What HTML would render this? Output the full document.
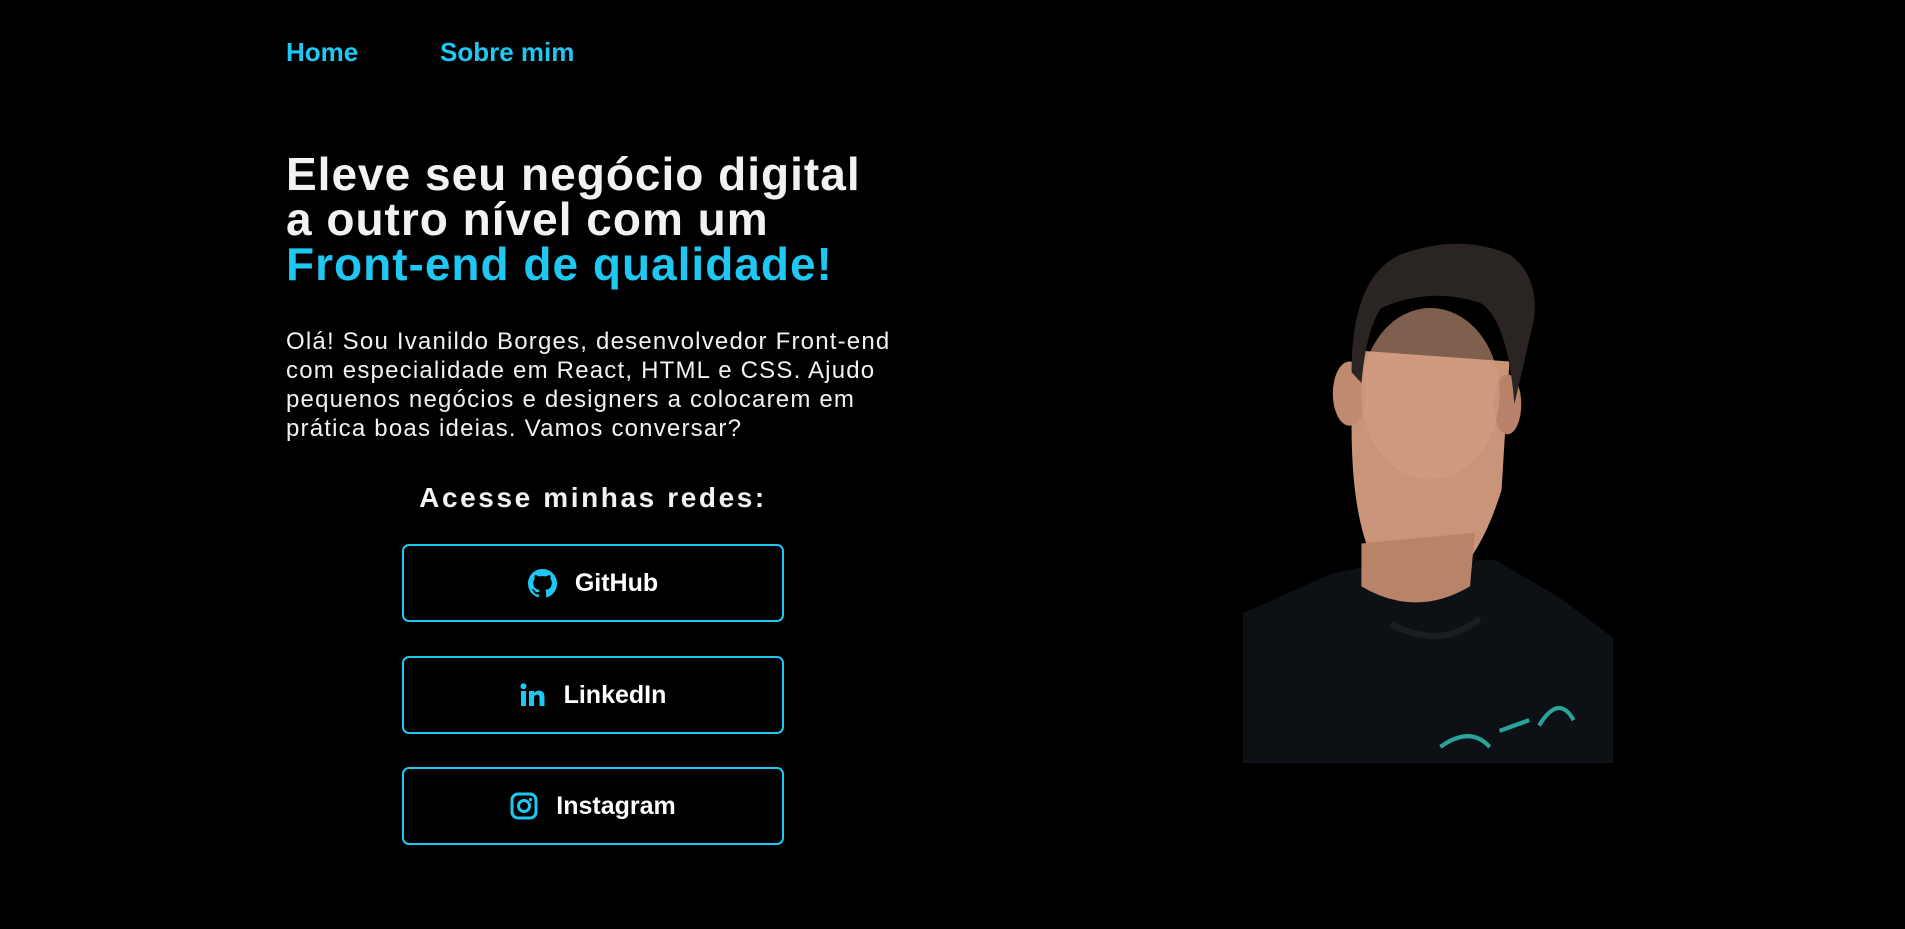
<!DOCTYPE html>
<html><head><meta charset="utf-8"><style>
*{margin:0;padding:0;box-sizing:border-box}
body{width:1905px;height:929px;background:#000;overflow:hidden;position:relative;font-family:"Liberation Sans",sans-serif;color:#f2f2f2}
.nav{position:absolute;top:37px;font-size:26px;font-weight:bold;color:#1ec8f2}
h1{position:absolute;left:286px;top:152px;font-size:46px;line-height:45px;font-weight:bold;letter-spacing:1px;white-space:nowrap}
h1 span{color:#1ec8f2}
p{position:absolute;left:286px;top:327px;font-size:24px;line-height:29px;letter-spacing:1.2px;white-space:nowrap}
h2{position:absolute;left:343px;width:500px;text-align:center;top:482px;font-size:28px;font-weight:bold;letter-spacing:2.6px}
.btn{position:absolute;left:402px;width:382px;height:78px;border:2px solid #1ec8f2;border-radius:7px;display:flex;align-items:center;justify-content:center;font-size:25px;font-weight:bold;color:#fff;gap:18px}
.btn svg{fill:#1ec8f2}
</style></head><body>
<div class="nav" style="left:286px">Home</div>
<div class="nav" style="left:440px">Sobre mim</div>
<h1>Eleve seu negócio digital<br>a outro nível com um<br><span>Front-end de qualidade!</span></h1>
<p>Olá! Sou Ivanildo Borges, desenvolvedor Front-end<br>com especialidade em React, HTML e CSS. Ajudo<br>pequenos negócios e designers a colocarem em<br>prática boas ideias. Vamos conversar?</p>
<h2>Acesse minhas redes:</h2>
<div class="btn" style="top:544px"><svg width="29" height="29" viewBox="0 0 16 16"><path d="M8 0C3.58 0 0 3.58 0 8c0 3.54 2.29 6.530 5.470 7.59.4.07.55-.17.55-.38v-1.34c-2.23.48-2.7-1.07-2.7-1.07-.36-.92-.89-1.170-.89-1.170-.73-.5.06-.49.06-.49.8.06 1.23.83 1.23.83.72 1.22 1.87.87 2.330.67.07-.52.28-.87.5-1.07-1.78-.2-3.64-.89-3.64-3.95 0-.87.31-1.59.82-2.15-.08-.2-.36-1.02.08-2.12 0 0 .67-.21 2.2.82a7.6 7.6 0 0 1 4 0c1.53-1.04 2.2-.82 2.2-.82.44 1.1.16 1.92.08 2.12.51.56.82 1.27.82 2.15 0 3.07-1.87 3.75-3.65 3.95.29.25.54.73.54 1.48v2.2c0 .21.15.46.55.38A8 8 0 0 0 16 8c0-4.42-3.58-8-8-8z"/></svg>GitHub</div>
<div class="btn" style="top:656px"><svg width="26" height="24" viewBox="0 0 26 24"><rect x="1" y="8" width="5" height="15"/><circle cx="3.5" cy="3.2" r="3"/><path d="M9 8h5v2.2c.8-1.4 2.5-2.6 5-2.6 4 0 5.5 2.5 5.5 6.5V23h-5v-8c0-2-.6-3.3-2.5-3.3S14 13 14 15v8H9z"/></svg>LinkedIn</div>
<div class="btn" style="top:767px"><svg width="28" height="28" viewBox="0 0 28 28"><rect x="2" y="2" width="24" height="24" rx="6" fill="none" stroke="#1ec8f2" stroke-width="3"/><circle cx="14" cy="14" r="5.5" fill="none" stroke="#1ec8f2" stroke-width="3"/><circle cx="20.5" cy="7.5" r="1.6"/></svg>Instagram</div>
<svg style="position:absolute;left:1243px;top:233px" width="375" height="530" viewBox="0 0 380 495" preserveAspectRatio="none">
<path d="M0 355 L90 318 L135 310 L255 305 L320 340 L375 378 L375 495 L0 495Z" fill="#0d1015"/>
<path d="M110 180 Q110 320 170 340 Q230 335 262 240 L270 120 L120 110Z" fill="#c99478"/>
<path d="M120 290 L120 330 Q175 360 230 330 L235 280Z" fill="#b88368"/>
<ellipse cx="108" cy="150" rx="17" ry="30" fill="#c08a70"/>
<ellipse cx="268" cy="160" rx="14" ry="28" fill="#b8826a"/>
<path d="M110 130 Q110 40 160 20 Q220 0 270 20 Q300 40 295 80 L275 160 Q268 80 240 65 Q190 50 140 70 Q125 90 120 140Z" fill="#2a2522"/>
<ellipse cx="190" cy="150" rx="70" ry="80" fill="#d39e82" opacity=".6"/>
<path d="M150 365 Q200 390 240 360" stroke="#1a1d22" stroke-width="6" fill="none"/>
<path d="M200 480 Q230 460 250 480 M260 465 l30 -10 M300 460 q20 -30 35 -5" stroke="#2aa39a" stroke-width="4" fill="none"/>
</svg>
</body></html>
